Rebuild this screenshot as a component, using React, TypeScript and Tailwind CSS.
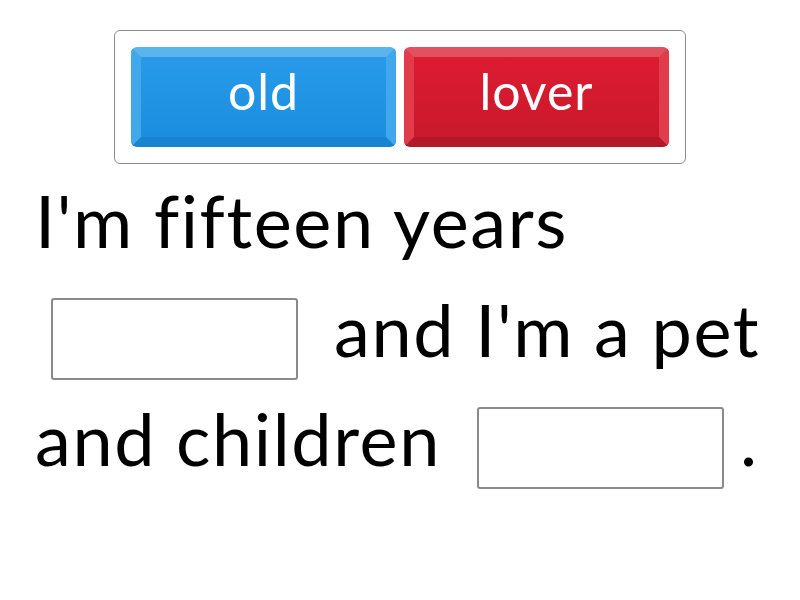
import React from "react";

const Blank = () => (
  <span className="inline-block align-middle mx-[16px] w-[247px] h-[82px] border-2 border-[#8a8a8a] rounded-[3px] bg-white" />
);

export default function App() {
  return (
    <div className="w-[800px] h-[600px] bg-white flex flex-col items-center" style={{ fontFamily: "Lato, 'Noto Sans', sans-serif", fontVariantLigatures: "none" }}>
      <div className="mt-[30px] flex gap-[8px] p-[16px] border border-[#8c8c8c] rounded-[6px]">
        <div className="w-[265px] h-[100px] rounded-[6px] border-[10px] border-t-[#5ab4ee] border-x-[#42a8ec] border-b-[#1a83cf] bg-gradient-to-b from-[#289ae9] to-[#1a8edf] flex items-center justify-center pb-[12px] text-white text-[50px] tracking-[1px] leading-none">
          old
        </div>
        <div className="w-[265px] h-[100px] rounded-[6px] border-[10px] border-t-[#e2515f] border-x-[#e03c4c] border-b-[#b3182a] bg-gradient-to-b from-[#dd1b31] to-[#c9192c] flex items-center justify-center pb-[12px] text-white text-[50px] tracking-[1px] leading-none">
          lover
        </div>
      </div>
      <div className="w-[750px] pl-[10px] mt-[2px] text-[72px] tracking-[1.6px] leading-[109px] text-black">
        I'm fifteen years <Blank /> and I'm a pet and children <Blank />.
      </div>
    </div>
  );
}
